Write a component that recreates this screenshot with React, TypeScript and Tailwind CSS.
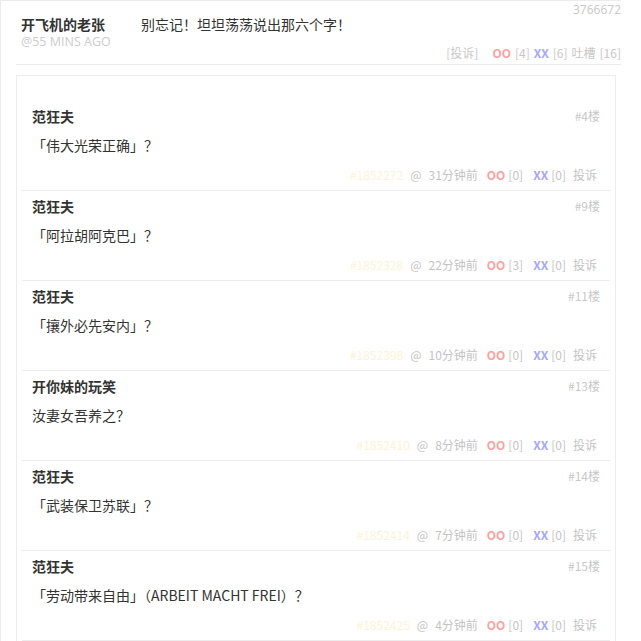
import React from 'react';

const comments = [
  { name: '范狂夫', floor: '#4楼', text: '「伟大光荣正确」？', id: '#1852272', time: '31分钟前', oo: 0, xx: 0 },
  { name: '范狂夫', floor: '#9楼', text: '「阿拉胡阿克巴」？', id: '#1852328', time: '22分钟前', oo: 3, xx: 0 },
  { name: '范狂夫', floor: '#11楼', text: '「攘外必先安内」？', id: '#1852398', time: '10分钟前', oo: 0, xx: 0 },
  { name: '开你妹的玩笑', floor: '#13楼', text: '汝妻女吾养之？', id: '#1852410', time: '8分钟前', oo: 0, xx: 0 },
  { name: '范狂夫', floor: '#14楼', text: '「武装保卫苏联」？', id: '#1852414', time: '7分钟前', oo: 0, xx: 0 },
  { name: '范狂夫', floor: '#15楼', text: '「劳动带来自由」（ARBEIT MACHT FREI）？', id: '#1852425', time: '4分钟前', oo: 0, xx: 0 },
];

export default function App() {
  return (
    <div
      className="min-h-[641px] bg-white"
      style={{ fontFamily: '"Noto Sans CJK SC", "Noto Sans", sans-serif' }}
    >
      <div className="w-[621px] border-l border-t border-[#ececec] pl-[15px] pb-4">
        {/* Post header */}
        <div className="flex h-[64px] border-b border-[#ececec] pl-[5px]">
          <div className="w-[120px] pt-[13px]">
            <div className="text-[14px] font-bold leading-[20px] text-[#333]">开飞机的老张</div>
            <div
              className="text-[12.5px] uppercase leading-[16px] text-[#cccccc]"
              style={{ fontFamily: '"Open Sans", sans-serif' }}
            >
              @55 mins ago
            </div>
          </div>
          <div className="flex-1 pt-[13px] text-[14px] leading-[20px] text-[#333]">
            别忘记！坦坦荡荡说出那六个字！
          </div>
          <div className="flex flex-col items-end justify-between pt-[1px] pb-[3px] text-[12px] leading-[16px] text-[#c8c8c8]">
            <div style={{ fontFamily: '"Open Sans", sans-serif' }}>3766672</div>
            <div className="flex items-center">
              <span>[投诉]</span>
              <span className="ml-[14px] font-bold text-[#ff9f9f]">OO</span>
              <span className="ml-[4px]">[4]</span>
              <span className="ml-[4px] font-bold text-[#a6a6ff]">XX</span>
              <span className="ml-[4px]">[6]</span>
              <span className="ml-[4px]">吐槽</span>
              <span className="ml-[4px]">[16]</span>
            </div>
          </div>
        </div>

        {/* Comments */}
        <div className="mt-[10px] w-[600px] border border-[#ececec] pt-[25px]">
          {comments.map((c) => (
            <div key={c.id} className="mx-[5px] border-b border-[#ececec] px-[10px]">
              <div className="flex h-[30px] items-center justify-between">
                <span className="text-[14px] font-bold text-[#333]">{c.name}</span>
                <span className="text-[12px] text-[#c8c8c8]">{c.floor}</span>
              </div>
              <div className="flex h-[28px] items-center text-[14px] text-[#333]">{c.text}</div>
              <div className="flex h-[31px] items-center justify-end pr-[3px] text-[12px] text-[#c4c4c4]">
                <span className="text-[#fbf4d6]">{c.id}</span>
                <span className="ml-[7px]">@</span>
                <span className="ml-[7px]">{c.time}</span>
                <span className="ml-[9px] font-bold text-[#ff9f9f]">OO</span>
                <span className="ml-[3px]">[{c.oo}]</span>
                <span className="ml-[10px] font-bold text-[#a6a6ff]">XX</span>
                <span className="ml-[3px]">[{c.xx}]</span>
                <span className="ml-[7px]">投诉</span>
              </div>
            </div>
          ))}
        </div>
      </div>
    </div>
  );
}
